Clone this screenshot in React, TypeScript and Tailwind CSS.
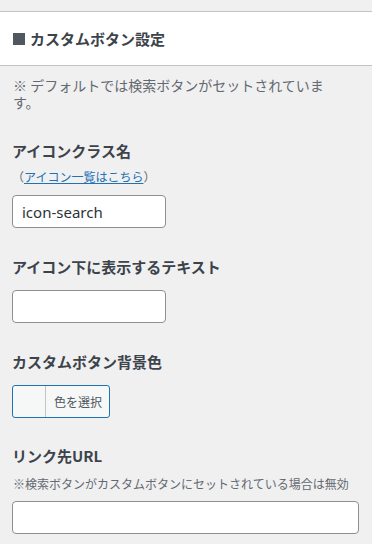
export default function App() {
  return (
    <div
      className="min-h-[544px] bg-[#f0f0f1] pt-[11px] text-[#3c434a]"
      style={{ fontFamily: '"Noto Sans CJK JP", "Noto Sans", sans-serif' }}
    >
      <div className="flex h-[55px] items-center border-y border-[#c3c4c7] bg-white px-[13px]">
        <span className="mr-[5px] h-3 w-3 bg-[#50575e]" />
        <h2 className="text-[15px] font-bold leading-5 text-[#3c434a]">カスタムボタン設定</h2>
      </div>

      <div className="px-3">
        <p className="mt-[11px] pl-px pr-[14px] text-[14px] leading-[17px] text-[#646970]">
          ※ デフォルトでは検索ボタンがセットされています。
        </p>

        <h3 className="mt-[30px] text-[15px] font-bold leading-5">アイコンクラス名</h3>
        <p className="mt-[7px] text-[12px] leading-[17px] text-[#646970]">
          （
          <a href="#" className="text-[#2271b1] underline">
            アイコン一覧はこちら
          </a>
          ）
        </p>
        <input
          type="text"
          defaultValue="icon-search"
          className="mt-[10px] block h-[33px] w-[154px] rounded-[4px] border border-[#8c8f94] bg-white px-[9px] text-[15px] text-[#2c3338] outline-none"
          style={{ fontFamily: '"Noto Sans", sans-serif' }}
        />

        <h3 className="mt-[29px] text-[15px] font-bold leading-5">アイコン下に表示するテキスト</h3>
        <input
          type="text"
          className="mt-[13px] block h-[33px] w-[154px] rounded-[4px] border border-[#8c8f94] bg-white px-[9px] text-[15px] outline-none"
        />

        <h3 className="mt-[29px] text-[15px] font-bold leading-5">カスタムボタン背景色</h3>
        <button
          type="button"
          className="mt-[13px] flex h-[33px] w-[98px] overflow-hidden rounded-[3px] border border-[#2271b1] bg-[#f6f7f7]"
        >
          <span className="h-full w-[33px] border-r border-[#c3c4c7]" />
          <span className="flex h-full items-center pl-[8px] text-[12px] text-[#50575e]">色を選択</span>
        </button>

        <h3 className="mt-[28px] text-[15px] font-bold leading-5">リンク先URL</h3>
        <p className="mt-[9px] pl-px text-[12px] leading-[17px] text-[#646970]">
          ※検索ボタンがカスタムボタンにセットされている場合は無効
        </p>
        <input
          type="text"
          className="mt-[9px] block h-[33px] w-[347px] rounded-[4px] border border-[#8c8f94] bg-white px-[9px] text-[15px] outline-none"
        />
      </div>
    </div>
  );
}
